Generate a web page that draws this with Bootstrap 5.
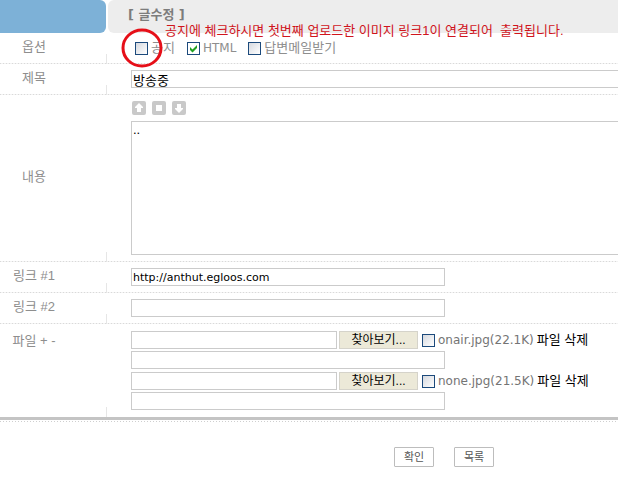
<!DOCTYPE html>
<html lang="ko">
<head>
<meta charset="utf-8">
<meta name="viewport" content="width=device-width, initial-scale=1">
<title>글수정</title>
<link rel="stylesheet" href="https://cdn.jsdelivr.net/npm/bootstrap@5.3.0/dist/css/bootstrap.min.css">
<style>
body{font:13px/18px "Liberation Sans","Noto Sans CJK KR",sans-serif;color:#8e8e8e;background:#fff;overflow-x:hidden}
.verd{font-family:"DejaVu Sans","Noto Sans CJK KR",sans-serif;font-size:11px}
.verd-lg{font-family:"DejaVu Sans","Noto Sans CJK KR",sans-serif;font-size:12px}
.head-side{width:106px;height:33px;background:#7db1d7;border-radius:0 6px 6px 0}
.head-title{height:33px;background:#ededed;border-radius:6px 0 0 6px;padding:6px 0 0 20px;margin-left:2px;font:bold 13px/18px "DejaVu Sans","Noto Sans CJK KR",sans-serif;color:#7c7c7c}
.form-line{background:repeating-linear-gradient(90deg,#d9d9d9 0 1px,#f3f3f3 1px 3px) left bottom/100% 1px no-repeat}
.side{width:107px;padding:0 39px 4px 0;background:linear-gradient(#e6e6e6,#e6e6e6) right bottom/1px 10px no-repeat;white-space:nowrap}
.side-top{padding-top:8px}
.fields{padding:6px 0 7px 24px;min-width:0}
.fields-files{padding-top:7px}
.box{display:block;height:18px;border:1px solid #cbcbcb;border-radius:0;padding:0 1px;background:#fff;color:#000;line-height:16px;outline-offset:-1px}
.bleed{width:100%;border-right:0}
.link-box{width:100%;max-width:314px}
.file-box{width:206px}
textarea.box{height:134px;resize:none;overflow:hidden}
.tick{appearance:none;width:13px;height:13px;margin:0;border:1px solid #1c4a7c;background:linear-gradient(135deg,#d6d9df,#fff);flex:none}
.tick:checked{background:url("data:image/svg+xml,%3Csvg xmlns='http://www.w3.org/2000/svg' viewBox='0 0 11 11'%3E%3Cpath d='M2 4v3l2.500 2.500L9 5V2L4.500 6.500z' fill='%2321a121'/%3E%3C/svg%3E") center/11px 11px no-repeat #fff}
.checks{gap:12px;padding:0 0 0 4px}
.checks label,.file-check{gap:3px;white-space:nowrap}
.file-check{margin-left:2px}
.tool{width:14px;height:14px;border:0;padding:0;background:none}
.tools{gap:6px;padding-left:1px;margin-bottom:6px}
.browse{width:79px;height:18px;border:1px solid #d5d3ca;background:#ece9d8;color:#000;padding:0;font-size:12px;line-height:14px;flex:none}
.pair{gap:2px}
.pairs{gap:3px}
.del{color:#000}
.size{color:#747474}
.thick{height:3px;background:#c4c4c4}
.under{height:2px;background:repeating-linear-gradient(90deg,#cfcfcf 0 1px,#fff 1px 3px) left bottom/100% 1px no-repeat}
.actions{gap:20px;padding:25px 0 15px 394px}
.act{width:40px;height:20px;border:1px solid #bdbdbd;border-radius:1px;background:#fff;color:#555;font-size:11px;line-height:16px;padding:0}
.note{left:165px;top:22px;color:#d0141c;white-space:pre}
.ring{left:121px;top:28px;width:42px;height:40px;pointer-events:none}
</style>
<script src="https://cdn.jsdelivr.net/npm/bootstrap@5.3.0/dist/js/bootstrap.bundle.min.js"></script>
</head>
<body>
<form class="position-relative">
  <header class="d-flex">
    <div class="head-side flex-shrink-0"></div>
    <h1 class="head-title flex-grow-1 mb-0">[ 글수정 ]</h1>
  </header>

  <div class="form-line d-flex">
    <div class="side flex-shrink-0 d-flex align-items-center justify-content-center">옵션</div>
    <div class="fields flex-grow-1">
      <div class="checks d-flex">
        <label class="d-flex align-items-center"><input class="tick" type="checkbox">공지</label>
        <label class="d-flex align-items-center"><input class="tick" type="checkbox" checked><span class="verd-lg">HTML</span></label>
        <label class="d-flex align-items-center"><input class="tick" type="checkbox">답변메일받기</label>
      </div>
    </div>
  </div>

  <div class="form-line d-flex">
    <label for="subject" class="side flex-shrink-0 d-flex align-items-center justify-content-center">제목</label>
    <div class="fields flex-grow-1"><input id="subject" class="box bleed" type="text" value="방송중"></div>
  </div>

  <div class="form-line d-flex">
    <label for="memo" class="side flex-shrink-0 d-flex align-items-center justify-content-center">내용</label>
    <div class="fields flex-grow-1">
      <div class="tools d-flex">
        <button type="button" class="tool d-flex" aria-label="줄이기"><svg width="14" height="14" viewBox="0 0 14 14"><rect width="14" height="14" rx="2" fill="#c9c9c9"/><path d="M7 2l4 4v1H9v4H5V7H3V6z" fill="#fff"/></svg></button>
        <button type="button" class="tool d-flex" aria-label="원래대로"><svg width="14" height="14" viewBox="0 0 14 14"><rect width="14" height="14" rx="2" fill="#c9c9c9"/><path d="M4 4h6v6H4z" fill="#fff"/></svg></button>
        <button type="button" class="tool d-flex" aria-label="늘리기"><svg width="14" height="14" viewBox="0 0 14 14"><rect width="14" height="14" rx="2" fill="#c9c9c9"/><path d="M7 12l4-4V7H9V3H5v4H3v1z" fill="#fff"/></svg></button>
      </div>
      <textarea id="memo" class="box bleed">..</textarea>
    </div>
  </div>

  <div class="form-line d-flex">
    <label for="link1" class="side flex-shrink-0 d-flex align-items-center justify-content-center">링크 #1</label>
    <div class="fields flex-grow-1"><input id="link1" class="box link-box verd" type="text" value="http://anthut.egloos.com"></div>
  </div>

  <div class="form-line d-flex">
    <label for="link2" class="side flex-shrink-0 d-flex align-items-center justify-content-center">링크 #2</label>
    <div class="fields flex-grow-1"><input id="link2" class="box link-box verd" type="text"></div>
  </div>

  <div class="d-flex">
    <div class="side side-top flex-shrink-0 text-center">파일 + -</div>
    <div class="fields fields-files pairs flex-grow-1 d-flex flex-column">
      <div class="pair d-flex flex-column">
        <div class="pair d-flex">
          <input class="box file-box verd" type="text" aria-label="파일 1">
          <button type="button" class="browse">찾아보기...</button>
          <label class="file-check d-flex align-items-center"><input class="tick" type="checkbox"><span class="verd-lg size">onair.jpg(22.1K)</span><span class="del">파일 삭제</span></label>
        </div>
        <input class="box link-box verd" type="text" aria-label="파일 2">
      </div>
      <div class="pair d-flex flex-column">
        <div class="pair d-flex">
          <input class="box file-box verd" type="text" aria-label="파일 3">
          <button type="button" class="browse">찾아보기...</button>
          <label class="file-check d-flex align-items-center"><input class="tick" type="checkbox"><span class="verd-lg size">none.jpg(21.5K)</span><span class="del">파일 삭제</span></label>
        </div>
        <input class="box link-box verd" type="text" aria-label="파일 4">
      </div>
    </div>
  </div>
  <div class="thick"></div>
  <div class="under"></div>

  <div class="actions d-flex">
    <button type="submit" class="act">확인</button>
    <button type="button" class="act">목록</button>
  </div>

  <div class="note position-absolute">공지에 체크하시면 첫번째 업로드한 이미지 링크1이 연결되어  출력됩니다.</div>
  <svg class="ring position-absolute" viewBox="0 0 42 40" aria-hidden="true"><ellipse cx="21" cy="20" rx="19" ry="18" fill="none" stroke="#e60f18" stroke-width="3"/></svg>
</form>
</body>
</html>
